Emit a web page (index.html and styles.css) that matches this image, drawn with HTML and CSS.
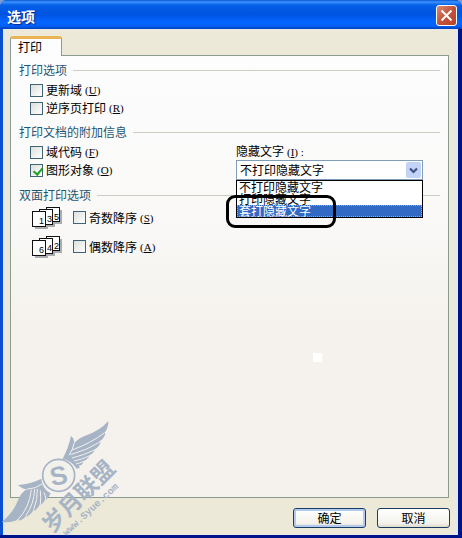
FILE: index.html
```html
<!DOCTYPE html>
<html lang="zh-CN">
<head>
<meta charset="UTF-8">
<meta name="viewport" content="width=device-width, initial-scale=1.0">
<title>选项</title>
<link rel="stylesheet" href="styles.css">
</head>
<body>
    <div class="window">
        <!-- Title bar -->
        <header class="titlebar">
            <h1>选项</h1>
            <button type="button" class="close" aria-label="关闭">
                <svg width="13" height="13" viewBox="0 0 13 13"><path d="M1.500 1.500L11.500 11.500M11.500 1.500L1.500 11.500" stroke="#fff" stroke-width="2"/></svg>
            </button>
        </header>

        <form class="dialog">
            <div class="tabs" role="tablist">
                <button type="button" class="tab" role="tab" aria-selected="true">打印</button>
            </div>

            <div class="panel" role="tabpanel">
                <!-- Print options -->
                <section>
                    <h2>打印选项</h2>
                    <div class="group">
                        <label class="check"><input type="checkbox">更新域<span class="key">(<u>U</u>)</span></label>
                        <label class="check"><input type="checkbox">逆序页打印<span class="key">(<u>R</u>)</span></label>
                    </div>
                </section>

                <!-- Extra information -->
                <section>
                    <h2>打印文档的附加信息</h2>
                    <div class="group columns">
                        <div>
                            <label class="check"><input type="checkbox">域代码<span class="key">(<u>F</u>)</span></label>
                            <label class="check"><input type="checkbox" checked>图形对象<span class="key">(<u>O</u>)</span></label>
                        </div>
                        <div class="field">
                            <label for="hiddenText">隐藏文字<span class="key">(<u>I</u>) :</span></label>
                            <div class="combo">
                                <select id="hiddenText">
                                    <option>不打印隐藏文字</option>
                                    <option>打印隐藏文字</option>
                                    <option>套打隐藏文字</option>
                                </select>
                                <span class="arrow">
                                    <svg width="9" height="7" viewBox="0 0 9 7"><path d="M1 1.500L4.500 5L8 1.500" fill="none" stroke="#3c5586" stroke-width="2.200"/></svg>
                                </span>
                                <ul class="list" role="listbox" aria-label="隐藏文字">
                                    <li role="option">不打印隐藏文字</li>
                                    <li role="option">打印隐藏文字</li>
                                    <li role="option" class="selected" aria-selected="true">套打隐藏文字</li>
                                </ul>
                                <div class="marker"></div>
                            </div>
                        </div>
                    </div>
                </section>

                <!-- Duplex options -->
                <section>
                    <h2>双面打印选项</h2>
                    <div class="duplex">
                        <svg class="pages" width="30" height="22" viewBox="0 0 30 22">
                            <path d="M17 16h12V3M10 19h12V6M3 21h12V8" fill="none" stroke="#a9adb0" stroke-width="2"/>
                            <g fill="#fff" stroke="#111">
                                <rect x="14.500" y=".5" width="13" height="14"/>
                                <rect x="7.500" y="2.500" width="13" height="15"/>
                                <rect x=".5" y="4.500" width="13" height="15"/>
                            </g>
                            <text x="7" y="17">1</text><text x="15" y="15">3</text><text x="22" y="13">5</text>
                        </svg>
                        <label class="check"><input type="checkbox">奇数降序<span class="key">(<u>S</u>)</span></label>
                    </div>
                    <div class="duplex">
                        <svg class="pages" width="30" height="22" viewBox="0 0 30 22">
                            <path d="M17 16h12V3M10 19h12V6M3 21h12V8" fill="none" stroke="#a9adb0" stroke-width="2"/>
                            <g fill="#fff" stroke="#111">
                                <rect x="14.500" y=".5" width="13" height="14"/>
                                <rect x="7.500" y="2.500" width="13" height="15"/>
                                <rect x=".5" y="4.500" width="13" height="15"/>
                            </g>
                            <text x="7" y="17">6</text><text x="15" y="15">4</text><text x="22" y="13">2</text>
                        </svg>
                        <label class="check"><input type="checkbox">偶数降序<span class="key">(<u>A</u>)</span></label>
                    </div>
                </section>
            </div>

            <div class="buttons">
                <button type="button" class="btn default">确定</button>
                <button type="button" class="btn">取消</button>
            </div>
        </form>

        <div class="speck"></div>

        <!-- Site watermark -->
        <svg class="watermark" width="120" height="138" viewBox="0 0 360 414">
            <g fill="#a6b4c5">
                <path d="M188 176Q205 145 213 108Q222 114 223 130Q232 116 256 107Q300 92 325 63Q326 82 314 98L316 101Q312 116 298 124L302 128Q296 142 282 149L284 152Q276 164 264 168L267 171Q260 181 248 184L250 188Q244 197 236 198L240 203L230 206Q217 183 188 176Z"/>
                <path d="M54 255Q93 252 124 236Q126 266 152 280Q148 292 138 299L137 294Q132 310 122 314L121 310Q114 328 102 332L102 327Q93 344 80 350L80 345Q70 360 56 362L56 357Q34 370 5 366Q38 340 52 305Q62 278 80 268Q66 267 54 255Z"/>
            </g>
            <g fill="none" stroke="#f3f1ec" stroke-width="3">
                <path d="M223 128Q218 150 207 166M216 150Q272 130 314 98M212 164Q262 150 300 126M216 174Q250 166 283 150M222 183Q246 178 265 169M228 192Q240 189 249 185"/>
                <path d="M80 268Q108 266 126 252M94 269Q88 324 53 360M104 267Q102 312 78 347M112 267Q113 300 101 329M121 271Q123 294 121 312M132 277Q137 288 137 297"/>
            </g>
            <circle cx="176" cy="226" r="48" fill="#f3f1ec" stroke="#a6b4c5" stroke-width="5"/>
            <text class="logo" x="176" y="254" transform="rotate(-12 176 226)">S</text>
            <text class="name" transform="translate(157 402) rotate(-45)">岁月联盟</text>
            <text class="site" transform="translate(199 409) rotate(-43)">www.Syue.com</text>
        </svg>
    </div>
</body>
</html>
```
FILE: styles.css
```css
* {
    box-sizing: border-box;
}
body {
    margin: 0;
    background: #7f9bd0;
    font-family: "Noto Sans CJK SC", sans-serif;
    font-size: 12px;
    line-height: 16px;
    color: #000;
}
button, select {
    font: inherit;
    color: inherit;
}
.window {
    position: relative;
    display: flex;
    flex-direction: column;
    min-height: 100vh;
    padding: 0 4px 0 3px;
    border-bottom: 3px solid #00148a;
    background: linear-gradient(to right, #0a4fd0, #0a4fd0 50%, #00148a 50%);
    border-radius: 7px 7px 0 0;
}
.titlebar {
    display: flex;
    align-items: center;
    justify-content: space-between;
    height: 29px;
    margin: 0 -4px 0 -3px;
    padding: 2px 5px 0 7px;
    border-radius: 7px 7px 0 0;
    background: linear-gradient(#0a56d0, #3a93ff 2px, #0560e8 5px, #0053e0 14px, #0366ff 22px, #0260f8 26px, #0040b8);
}
.titlebar h1 {
    margin: 0;
    font-size: 14px;
    line-height: 20px;
    color: #fff;
    text-shadow: 1px 1px 1px #0a2a80;
}
.close {
    display: flex;
    align-items: center;
    justify-content: center;
    width: 21px;
    height: 21px;
    padding: 0;
    border: 1px solid #fff;
    border-radius: 3px;
    background: linear-gradient(135deg, #d98a78, #c4523a 50%, #b8422a);
}
.dialog {
    display: flex;
    flex-direction: column;
    flex: 1;
    padding: 7px 9px 7px 7px;
    background: #ece9d8;
    box-shadow: inset 2px 0 2px #e3e9f5, inset -3px 0 2px #e3e9f5;
}
.tabs {
    display: flex;
}
.tab {
    position: relative;
    z-index: 1;
    width: 52px;
    height: 20px;
    margin-bottom: -1px;
    padding: 0 0 2px 7px;
    border: 1px solid #8a9b9c;
    border-top: 3px solid #e9b356;
    border-bottom: 0;
    border-radius: 3px 3px 0 0;
    background: #fdfdfd;
    line-height: 15px;
    text-align: left;
}
.panel {
    flex: 1;
    padding: 6px 8px;
    border: 1px solid #8a9b8f;
    background: linear-gradient(#fdfdfe, #f9f8f6 40%, #f5f2ed 60%);
}
h2 {
    display: flex;
    align-items: center;
    gap: 6px;
    margin: 0;
    font-size: 12px;
    font-weight: normal;
    color: #1f5672;
}
h2::after {
    content: "";
    flex: 1;
    height: 1px;
    background: #cfcdc3;
}
.group {
    padding: 3px 0 7px 11px;
}
.columns {
    display: grid;
    grid-template-columns: 206px 1fr;
}
.check {
    display: flex;
    align-items: center;
    height: 18px;
}
.check input {
    appearance: none;
    width: 13px;
    height: 13px;
    margin: 0 3px 0 0;
    border: 1px solid #3f6474;
    background: linear-gradient(135deg, #dcdfdc, #fff);
}
.check input:checked::after {
    content: "";
    display: block;
    width: 4px;
    height: 7px;
    margin: 1px 0 0 4px;
    border: solid #21a121;
    border-width: 0 2px 2px 0;
    transform: rotate(40deg);
}
.key {
    margin-left: 3px;
    font-family: "Liberation Serif", serif;
    font-size: 11px;
}
.field {
    padding-right: 17px;
}
.field label {
    display: block;
    height: 17px;
}
.combo {
    position: relative;
}
.combo select {
    display: block;
    appearance: none;
    width: 100%;
    height: 20px;
    padding: 0 20px 0 3px;
    border: 1px solid #7f9db9;
    border-radius: 0;
    background: #fff;
}
.arrow {
    position: absolute;
    top: 2px;
    right: 2px;
    display: flex;
    align-items: center;
    justify-content: center;
    width: 15px;
    height: 16px;
    border-radius: 2px;
    background: #c3d3f8;
    pointer-events: none;
}
.list {
    position: absolute;
    top: 20px;
    left: 0;
    right: 0;
    margin: 0;
    padding: 0;
    border: 1px solid #000;
    background: #fff;
    list-style: none;
    line-height: 12px;
}
.list li {
    height: 12px;
    padding-left: 2px;
}
.list .selected {
    background: #316ac5;
    color: #fff;
    outline: 1px dotted #c9a46a;
    outline-offset: -1px;
}
.marker {
    position: absolute;
    top: 35px;
    left: -10px;
    width: 110px;
    height: 33px;
    border: 3px solid #000;
    border-radius: 9px;
    pointer-events: none;
}
.duplex {
    display: flex;
    align-items: center;
    gap: 11px;
    height: 29px;
    padding-left: 13px;
}
.pages text {
    font: 9px "Liberation Sans", sans-serif;
}
.buttons {
    display: flex;
    justify-content: flex-end;
    gap: 11px;
    margin: 10px -1px 0 0;
}
.btn {
    width: 73px;
    height: 20px;
    padding: 0;
    border: 1px solid #1c3d63;
    border-radius: 3px;
    background: linear-gradient(#fff, #f3f2ea 80%, #dcd8cc);
    line-height: 18px;
}
.btn.default {
    box-shadow: inset 0 0 0 2px #b3caf0;
}
.speck {
    position: absolute;
    top: 353px;
    left: 313px;
    width: 9px;
    height: 9px;
    background: #fff;
}
.watermark {
    position: absolute;
    left: 0;
    bottom: -3px;
    pointer-events: none;
}
.watermark text {
    fill: #a6b4c5;
    font-weight: bold;
}
.watermark .logo {
    font-family: "Liberation Sans", sans-serif;
    font-size: 78px;
    text-anchor: middle;
}
.watermark .name {
    font-family: "Noto Sans CJK SC", sans-serif;
    font-size: 68px;
}
.watermark .site {
    font-family: "Liberation Mono", monospace;
    font-size: 30px;
}
```
